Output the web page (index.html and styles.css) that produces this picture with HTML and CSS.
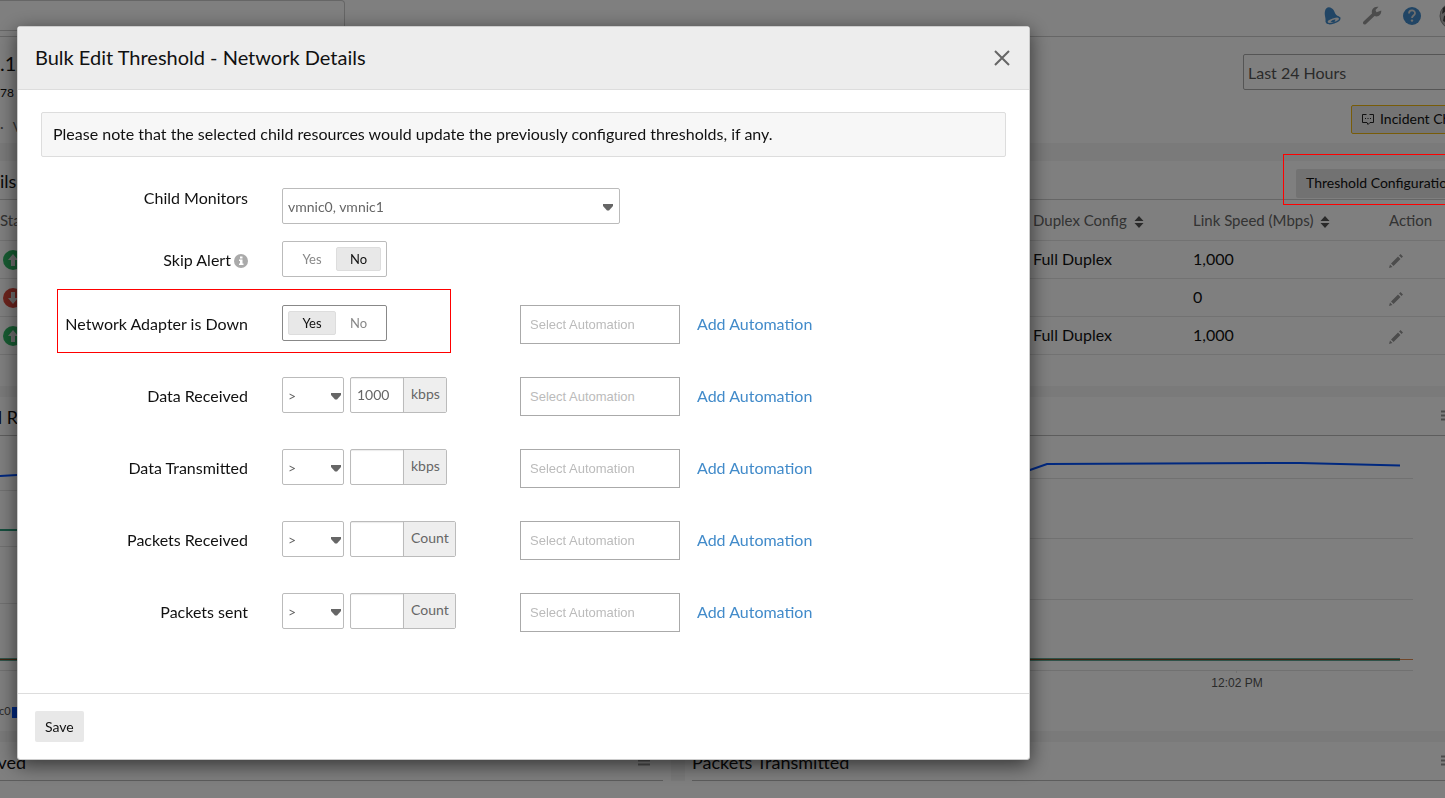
FILE: index.html
```html
<!doctype html>
<html lang="en">
    <head>
        <meta charset="UTF-8" />
        <meta name="viewport" content="width=device-width, initial-scale=1.0" />
        <title>Bulk Edit Threshold - Network Details</title>
        <link rel="stylesheet" href="styles.css">
    </head>
    <body>
        <div class="page">
            <!-- Top bar -->
            <header class="topbar">
                <input class="search" type="text" aria-label="Search" />
                <div class="topbar-icons">
                    <svg width="18" height="20" viewBox="0 0 18 20">
                        <path d="M1.500 16C2 11 0 9 1 5 2 1 5 .5 8 2.500 11 4.500 10.500 8 13 9.500L16.500 11.500 16 14 3 18Z" fill="#428bca" />
                        <ellipse cx="9.300" cy="14.300" rx="6.600" ry="2.600" transform="rotate(-18 9.300 14.300)" fill="#eee" stroke="#428bca" stroke-width="1.400" />
                        <path d="M6.500 16Q8 13 11.500 13.500L10.500 16Z" fill="#428bca" />
                    </svg>
                    <svg width="20" height="20" viewBox="0 0 20 20">
                        <path d="M1.500 15.500 10 7.500C9 3.500 12 0 16.500.8L13.500 4 14.500 6.300 19.300 4.500C19.500 9 16 11.500 12.500 10L4 18C2 19.500 0 17.500 1.500 15.500Z" fill="#999" />
                    </svg>
                    <svg width="20" height="20" viewBox="0 0 20 20">
                        <circle cx="10" cy="10" r="9" fill="#428bca" />
                        <path d="M7 7.500C7 3.500 13 3.500 13 7.200 13 9.500 10 9.500 10 12" fill="none" stroke="#ddd" stroke-width="1.800" />
                        <circle cx="10" cy="14.600" r="1.200" fill="#ddd" />
                    </svg>
                    <svg width="28" height="28" viewBox="0 0 28 28">
                        <circle cx="14" cy="14" r="13" fill="#bbb" stroke="#888" />
                        <path d="M4 6 9 3 7 9 3 12ZM5 14 9 12 8 21 4 19Z" fill="#444" />
                    </svg>
                </div>
            </header>

            <!-- Monitor header -->
            <section class="monitor-header">
                <div class="monitor-info">
                    <div class="monitor-name">.12</div>
                    <div class="monitor-id">78</div>
                    <div class="monitor-tags"><span>·</span><span>V</span></div>
                </div>
                <div class="monitor-actions">
                    <select class="period" aria-label="Period">
                        <option>Last 24 Hours</option>
                    </select>
                    <button class="incident" type="button">
                        <svg width="12" height="12" viewBox="0 0 12 12" fill="none" stroke="#222">
                            <path d="M4.500 1.500H.5V9.500H5L6 11.500M7.500 1.500H11.500V9.500H8L6 11.500M3 5.500H4M5.500 5.500H6.500M8 5.500H9" />
                        </svg>
                        Incident Chat
                    </button>
                </div>
            </section>

            <!-- Network details -->
            <section class="details">
                <div class="details-header">
                    <div class="panel-title">ils</div>
                    <button class="threshold" type="button">Threshold Configuration</button>
                </div>
                <table class="details-table">
                    <thead>
                        <tr>
                            <th>Status</th>
                            <th class="duplex">
                                Duplex Config
                                <svg class="sort" width="10" height="14" viewBox="0 0 10 14"><path d="M5 1 9.500 6H.5ZM5 13 .5 8H9.500Z" fill="#555" /></svg>
                            </th>
                            <th class="speed">
                                Link Speed (Mbps)
                                <svg class="sort" width="10" height="14" viewBox="0 0 10 14"><path d="M5 1 9.500 6H.5ZM5 13 .5 8H9.500Z" fill="#555" /></svg>
                            </th>
                            <th class="action">Action</th>
                        </tr>
                    </thead>
                    <tbody>
                        <tr>
                            <td><svg class="status" width="20" height="20" viewBox="0 0 20 20"><circle cx="10" cy="10" r="10" fill="#2fb765" /><path d="M10 4 15 10H12V16H8V10H5Z" fill="#ddd" /></svg></td>
                            <td>Full Duplex</td>
                            <td>1,000</td>
                            <td><svg width="14" height="14" viewBox="0 0 14 14" fill="#999"><path d="M0 14 1 10.500 3.500 13ZM2 9.500 9 2.500 11.500 5 4.500 12ZM10 1.500 11.500 0 14 2.500 12.500 4Z" /></svg></td>
                        </tr>
                        <tr>
                            <td><svg class="status" width="20" height="20" viewBox="0 0 20 20"><circle cx="10" cy="10" r="10" fill="#d9483b" /><path d="M10 16 5 10H8V4H12V10H15Z" fill="#ddd" /></svg></td>
                            <td></td>
                            <td>0</td>
                            <td><svg width="14" height="14" viewBox="0 0 14 14" fill="#999"><path d="M0 14 1 10.500 3.500 13ZM2 9.500 9 2.500 11.500 5 4.500 12ZM10 1.500 11.500 0 14 2.500 12.500 4Z" /></svg></td>
                        </tr>
                        <tr>
                            <td><svg class="status" width="20" height="20" viewBox="0 0 20 20"><circle cx="10" cy="10" r="10" fill="#2fb765" /><path d="M10 4 15 10H12V16H8V10H5Z" fill="#ddd" /></svg></td>
                            <td>Full Duplex</td>
                            <td>1,000</td>
                            <td><svg width="14" height="14" viewBox="0 0 14 14" fill="#999"><path d="M0 14 1 10.500 3.500 13ZM2 9.500 9 2.500 11.500 5 4.500 12ZM10 1.500 11.500 0 14 2.500 12.500 4Z" /></svg></td>
                        </tr>
                    </tbody>
                </table>
            </section>

            <!-- Charts -->
            <div class="charts">
                <section class="panel wide">
                    <div class="panel-header">
                        <div class="clip panel-title"><span>d R</span></div>
                        <svg class="menu" width="12" height="12" viewBox="0 0 12 12"><path d="M0 1.500H12M0 5.500H12M0 9.500H12" stroke="#999" stroke-width="2" /></svg>
                    </div>
                    <svg class="chart" viewBox="0 0 1485 295" preserveAspectRatio="xMinYMin slice">
                        <g stroke="#e2e2e2">
                            <path d="M0 54.500H600M0 110.500H600M0 167.500H600M0 234.500H600" />
                            <path d="M700 42.500H1413M700 102.500H1413M700 163.500H1413M700 234.500H1413M1236.500 234V237" />
                        </g>
                        <g fill="none" stroke-width="2">
                            <path d="M0 40 17 39H600M1000 43 1030 34 1047 28 1300 27 1400 29.500" stroke="#0050ff" />
                            <path d="M0 94H600" stroke="#2b9c7c" />
                            <path d="M1400 223.500H1413" stroke="#e08a50" stroke-width="1" />
                            <path d="M0 223.500H600M700 223.500H1400" stroke="#5fa592" stroke-width="3" />
                            <path d="M0 223.500H600M700 223.500H1400" stroke="#7d4b20" stroke-width="1" />
                        </g>
                        <rect x="12" y="271" width="11" height="11" fill="#0050ff" />
                        <text class="legend" x="-1" y="279">c0</text>
                        <text class="tick" x="1237" y="251" text-anchor="middle">12:02 PM</text>
                    </svg>
                </section>
            </div>
            <div class="charts">
                <section class="panel">
                    <div class="panel-header">
                        <div class="clip panel-title received"><span>ved</span></div>
                        <svg class="menu" width="12" height="12" viewBox="0 0 12 12"><path d="M0 1.500H12M0 5.500H12M0 9.500H12" stroke="#999" stroke-width="2" /></svg>
                    </div>
                </section>
                <section class="panel">
                    <div class="panel-header">
                        <div class="panel-title">Packets Transmitted</div>
                        <svg class="menu" width="12" height="12" viewBox="0 0 12 12"><path d="M0 1.500H12M0 5.500H12M0 9.500H12" stroke="#999" stroke-width="2" /></svg>
                    </div>
                </section>
            </div>
        </div>

        <div class="overlay">
            <div class="page-mark"></div>
            <form class="modal" role="dialog" aria-labelledby="modal-title">
                <div class="modal-header">
                    <h1 id="modal-title">Bulk Edit Threshold - Network Details</h1>
                    <button class="close" type="button" aria-label="Close">
                        <svg width="16" height="16" viewBox="0 0 16 16"><path d="M1 1 15 15M15 1 1 15" stroke="#666" stroke-width="2" /></svg>
                    </button>
                </div>

                <div class="modal-body">
                    <p class="note">Please note that the selected child resources would update the previously configured thresholds, if any.</p>

                    <div class="form-row monitors">
                        <label for="monitors">Child Monitors</label>
                        <select class="dropdown" id="monitors">
                            <option>vmnic0, vmnic1</option>
                        </select>
                    </div>

                    <div class="form-row skip">
                        <span class="label" id="skip-label">Skip Alert
                            <svg class="info" width="14" height="14" viewBox="0 0 14 14"><circle cx="7" cy="7" r="7" fill="#aaa" /><path d="M6 2.500H8.500V4.500H6ZM5 5.500H8.500V9.500H9.500V11H5V9.500H6V7H5Z" fill="#fff" /></svg>
                        </span>
                        <div class="toggle" role="radiogroup" aria-labelledby="skip-label">
                            <input type="radio" id="skip-yes" name="skip" />
                            <label for="skip-yes">Yes</label>
                            <input type="radio" id="skip-no" name="skip" checked />
                            <label for="skip-no">No</label>
                        </div>
                    </div>

                    <div class="form-row">
                        <div class="row-mark"></div>
                        <span class="label" id="adapter-label">Network Adapter is Down</span>
                        <div class="control">
                            <div class="toggle active" role="radiogroup" aria-labelledby="adapter-label">
                                <input type="radio" id="adapter-yes" name="adapter" checked />
                                <label for="adapter-yes">Yes</label>
                                <input type="radio" id="adapter-no" name="adapter" />
                                <label for="adapter-no">No</label>
                            </div>
                        </div>
                        <input class="automation" type="text" placeholder="Select Automation" aria-label="Automation for network adapter" />
                        <a class="add" href="#">Add Automation</a>
                    </div>

                    <div class="form-row">
                        <label for="data-received">Data Received</label>
                        <div class="control">
                            <select class="dropdown operator" aria-label="Data received condition"><option>&gt;</option></select>
                            <div class="value">
                                <input type="text" id="data-received" value="1000" />
                                <span class="unit">kbps</span>
                            </div>
                        </div>
                        <input class="automation" type="text" placeholder="Select Automation" aria-label="Automation for data received" />
                        <a class="add" href="#">Add Automation</a>
                    </div>

                    <div class="form-row">
                        <label for="data-transmitted">Data Transmitted</label>
                        <div class="control">
                            <select class="dropdown operator" aria-label="Data transmitted condition"><option>&gt;</option></select>
                            <div class="value">
                                <input type="text" id="data-transmitted" />
                                <span class="unit">kbps</span>
                            </div>
                        </div>
                        <input class="automation" type="text" placeholder="Select Automation" aria-label="Automation for data transmitted" />
                        <a class="add" href="#">Add Automation</a>
                    </div>

                    <div class="form-row">
                        <label for="packets-received">Packets Received</label>
                        <div class="control">
                            <select class="dropdown operator" aria-label="Packets received condition"><option>&gt;</option></select>
                            <div class="value">
                                <input type="text" id="packets-received" />
                                <span class="unit">Count</span>
                            </div>
                        </div>
                        <input class="automation" type="text" placeholder="Select Automation" aria-label="Automation for packets received" />
                        <a class="add" href="#">Add Automation</a>
                    </div>

                    <div class="form-row">
                        <label for="packets-sent">Packets sent</label>
                        <div class="control">
                            <select class="dropdown operator" aria-label="Packets sent condition"><option>&gt;</option></select>
                            <div class="value">
                                <input type="text" id="packets-sent" />
                                <span class="unit">Count</span>
                            </div>
                        </div>
                        <input class="automation" type="text" placeholder="Select Automation" aria-label="Automation for packets sent" />
                        <a class="add" href="#">Add Automation</a>
                    </div>
                </div>

                <div class="modal-footer">
                    <button class="save" type="submit">Save</button>
                </div>
            </form>
        </div>
    </body>
</html>
```
FILE: styles.css
```css
* {
    box-sizing: border-box;
}
body {
    margin: 0;
    font-family: Lato, "Liberation Sans", sans-serif;
    font-size: 16px;
    line-height: 20px;
    color: #111;
    background: #fff;
    overflow: hidden;
}
button,
input,
select {
    font-family: inherit;
    color: inherit;
}
svg {
    flex-shrink: 0;
}

/* Page behind the dialog, it runs past the right edge of the window */
.page {
    width: calc(100% + 40px);
    height: 100vh;
    overflow: hidden;
}
.clip {
    display: flex;
    justify-content: flex-end;
    width: 18px;
    overflow: hidden;
    white-space: nowrap;
}
.topbar {
    display: flex;
    justify-content: space-between;
    height: 37px;
    border-bottom: 1px solid #ccc;
}
.search {
    width: 345px;
    height: 31px;
    border: 1px solid #ccc;
    border-left: none;
    border-radius: 0 4px 4px 0;
    background: none;
}
.topbar-icons {
    display: flex;
    gap: 20px;
    padding: 6px 18px 0 0;
}
.topbar-icons svg:last-child {
    margin-left: -3px;
    margin-top: -4px;
}
.monitor-header {
    display: flex;
    justify-content: space-between;
    height: 106px;
}
.monitor-name {
    padding-top: 16px;
    font-size: 20px;
}
.monitor-id {
    padding-top: 10px;
    font-size: 12px;
}
.monitor-tags {
    display: flex;
    gap: 9px;
    padding-top: 14px;
    font-size: 14px;
    color: #666;
}
.monitor-actions {
    display: flex;
    flex-direction: column;
    align-items: flex-end;
    gap: 15px;
    padding-top: 17px;
}
.period {
    width: 242px;
    height: 36px;
    padding: 0 4px;
    border: 1px solid #aaa;
    border-radius: 2px;
    background: none;
    font-size: 16px;
    color: #555;
    appearance: none;
}
.incident {
    display: flex;
    align-items: center;
    gap: 6px;
    width: 134px;
    height: 29px;
    padding: 0 10px 2px;
    border: 1px solid #f0b810;
    border-radius: 2px;
    background: #e8e8e8;
    font-size: 14px;
}
.details {
    height: 243px;
    border-top: 18px solid #f5f5f5;
}
.details-header {
    display: flex;
    justify-content: space-between;
    align-items: center;
    height: 39px;
    border-bottom: 1px solid #ccc;
}
.panel-title {
    padding-top: 2px;
    font-size: 18px;
    line-height: 24px;
}
.threshold {
    width: 180px;
    height: 29px;
    margin: 7px 9px 0 0;
    padding: 0 10px 2px;
    border: none;
    border-radius: 2px;
    background: #e4e4e4;
    font-size: 14px;
    text-align: left;
}
.details-table {
    width: 100%;
    table-layout: fixed;
    border-collapse: collapse;
}
.details-table th,
.details-table td {
    height: 38px;
    padding: 0;
    border-bottom: 1px solid #e4e4e4;
    text-align: left;
    white-space: nowrap;
}
.details-table th {
    height: 40px;
    font-size: 15px;
    font-weight: normal;
    color: #666;
}
.details-table svg {
    vertical-align: middle;
}
.sort {
    margin-left: 3px;
}
.status {
    margin-left: 3px;
}
.duplex {
    width: 160px;
}
.speed {
    width: 196px;
}
.action {
    width: 96px;
}
.charts {
    display: flex;
    gap: 14px;
    border-top: 11px solid #f5f5f5;
    background: #f5f5f5;
}
.panel {
    flex: 1;
    background: #fff;
}
.panel:first-child:not(.wide) {
    flex: 0 0 671px;
    padding-right: 8px;
}
.panel + .panel {
    padding-left: 7px;
}
.panel-header {
    display: flex;
    justify-content: space-between;
    align-items: center;
    height: 39px;
    padding-right: 13px;
    border-bottom: 1px solid #bbb;
}
.panel + .panel .panel-header,
.wide .panel-header {
    padding-right: 32px;
}
.received {
    width: 26px;
}
.chart {
    display: block;
    width: 100%;
    height: 295px;
}
.legend {
    font-size: 11px;
    fill: #555;
}
.tick {
    font-family: "Liberation Sans", Arial, sans-serif;
    font-size: 12px;
    fill: #555;
}

/* Dialog */
.overlay {
    position: fixed;
    inset: 0;
    padding: 26px 415px 38px 17px;
    background: rgba(0, 0, 0, 0.5);
}
.page-mark {
    position: absolute;
    top: 154px;
    right: -10px;
    width: 172px;
    height: 51px;
    border: 1px solid #f00;
}
.modal {
    border: 1px solid #ccc;
    border-radius: 3px;
    background: #fff;
    box-shadow: 0 5px 20px rgba(0, 0, 0, 0.6);
}
.modal-header {
    display: flex;
    justify-content: space-between;
    align-items: center;
    height: 63px;
    padding: 0 19px 0 17px;
    border-bottom: 1px solid #ddd;
    background: #ededed;
}
.modal-header h1 {
    margin: 0;
    padding-bottom: 2px;
    font-size: 20px;
    font-weight: normal;
    line-height: 24px;
}
.close {
    display: flex;
    padding: 0;
    border: none;
    background: none;
}
.modal-body {
    padding: 22px 23px 28px;
}
.note {
    margin: 0 0 31px;
    padding: 11px 11px 12px;
    border: 1px solid #ddd;
    border-radius: 2px;
    background: #f7f7f7;
}
.form-row {
    position: relative;
    display: flex;
    align-items: flex-start;
    height: 72px;
}
.form-row > label,
.label {
    width: 207px;
    margin-right: 34px;
    line-height: 38px;
    text-align: right;
}
.form-row.monitors {
    height: 53px;
}
.monitors > label {
    line-height: 20px;
}
.form-row.skip {
    height: 64px;
}
.info {
    margin-left: -1px;
    vertical-align: -2px;
}
.control {
    display: flex;
    gap: 6px;
    width: 238px;
}
.dropdown {
    width: 338px;
    height: 36px;
    padding: 0 5px;
    border: 1px solid #bbb;
    border-radius: 2px;
    background: #fff url("data:image/svg+xml,<svg xmlns='http://www.w3.org/2000/svg' width='10' height='7'><path d='M0 0H10V2L6 6.500H4L0 2Z' fill='%23666'/></svg>") no-repeat right 6px top 15px;
    font-size: 14px;
    color: #666;
    appearance: none;
}
.dropdown.operator {
    width: 62px;
    background-position: right 2px top 15px;
}
.toggle {
    display: flex;
    height: 36px;
    padding: 5px;
    border: 1px solid #bbb;
    border-radius: 2px;
}
.toggle.active {
    border-color: #888;
}
.toggle input {
    position: absolute;
    opacity: 0;
    pointer-events: none;
}
.toggle label {
    width: 48px;
    border: 1px solid transparent;
    border-radius: 2px;
    font-size: 13px;
    line-height: 23px;
    text-align: center;
    color: #888;
}
.toggle label:last-child {
    width: 45px;
}
.toggle input:checked + label {
    border-color: #ddd;
    background: #e8e8e8;
    color: #111;
}
.value {
    display: flex;
    height: 36px;
    border: 1px solid #bbb;
    border-radius: 2px;
    font-size: 14px;
    color: #666;
}
.value input {
    width: 52px;
    padding: 0 6px 2px;
    border: none;
    background: none;
    font-size: 14px;
    box-shadow: inset 0 1px 1px rgba(0, 0, 0, 0.08);
}
.unit {
    padding: 0 6px 0 7px;
    border-left: 1px solid #bbb;
    background: #eee;
    line-height: 32px;
}
.automation {
    width: 160px;
    height: 39px;
    margin-right: 17px;
    padding: 0 9px;
    border: 1px solid #aaa;
    font-family: "Liberation Sans", Arial, sans-serif;
    font-size: 13px;
}
.automation::placeholder {
    color: #bbb;
}
.add {
    line-height: 38px;
    color: #428bca;
    text-decoration: none;
}
.row-mark {
    position: absolute;
    top: -16px;
    left: 16px;
    width: 394px;
    height: 64px;
    border: 1px solid #f00;
    pointer-events: none;
}
.modal-footer {
    padding: 17px;
    border-top: 1px solid #ddd;
}
.save {
    display: block;
    height: 31px;
    padding: 0 10px;
    border: none;
    border-radius: 2px;
    background: #e8e8e8;
    font-size: 14px;
}
```
